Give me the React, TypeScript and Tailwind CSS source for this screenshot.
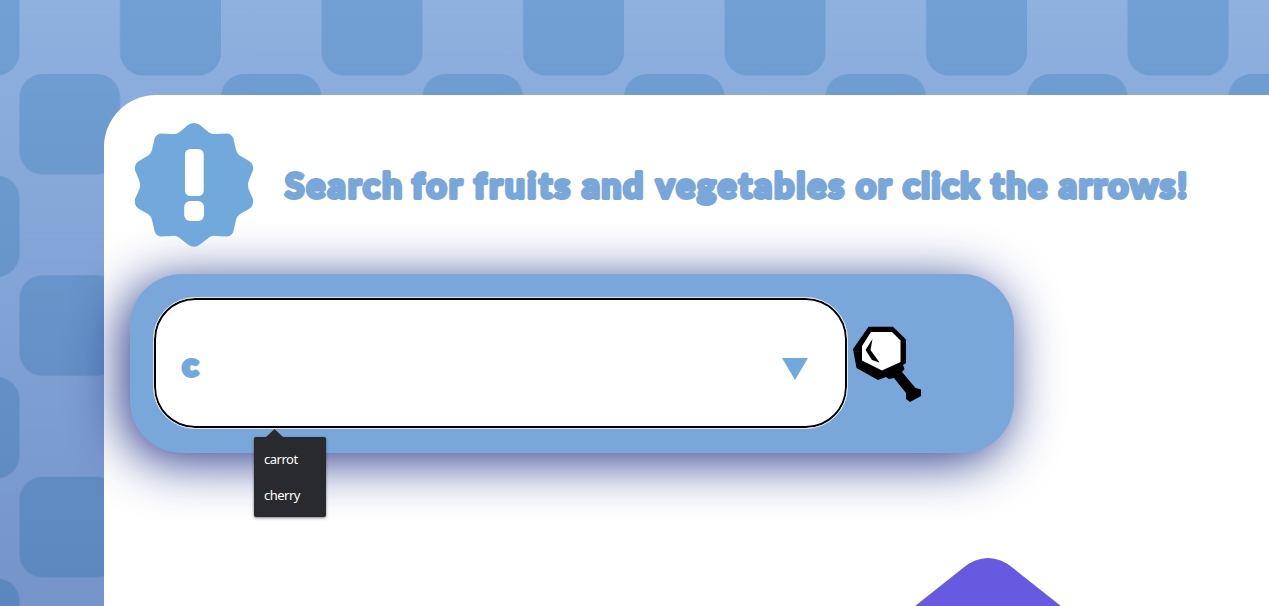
const headingWords = [
  { word: "Search", x: 3, width: 117 },
  { word: "for", x: 130, width: 50 },
  { word: "fruits", x: 192, width: 96 },
  { word: "and", x: 300, width: 61 },
  { word: "vegetables", x: 374, width: 188 },
  { word: "or", x: 574, width: 35 },
  { word: "click", x: 621, width: 76 },
  { word: "the", x: 709, width: 56 },
  { word: "arrows!", x: 777, width: 128 },
];

function Backdrop() {
  return (
    <svg className="absolute inset-0 h-full w-full" aria-hidden="true">
      <defs>
        <linearGradient id="sky" x1="0" y1="0" x2="0" y2="1">
          <stop offset="0" stopColor="#8eb1e0" />
          <stop offset="1" stopColor="#7494ca" />
        </linearGradient>
        <linearGradient id="tileShade" gradientUnits="userSpaceOnUse" x1="0" y1="0" x2="0" y2="606">
          <stop offset="0" stopColor="#72a0d4" />
          <stop offset="1" stopColor="#5b86be" />
        </linearGradient>
        <pattern id="tiles" width="201.5" height="201.4" x="19.5" y="74" patternUnits="userSpaceOnUse">
          <rect x="0" y="0" width="100.5" height="100.5" rx="23" fill="#fff" />
          <rect x="100.5" y="101.5" width="101" height="101.5" rx="23" fill="#fff" />
          <rect x="100.5" y="-99.9" width="101" height="101.5" rx="23" fill="#fff" />
        </pattern>
        <mask id="tileMask">
          <rect width="1269" height="606" fill="url(#tiles)" />
        </mask>
      </defs>
      <rect width="100%" height="100%" fill="url(#sky)" />
      <rect width="1269" height="606" fill="url(#tileShade)" mask="url(#tileMask)" />
    </svg>
  );
}

function Badge() {
  return (
    <svg className="h-[124px] w-[120px] shrink-0" viewBox="134 123 120 124" aria-hidden="true">
      <path
        fill="#72a9dd"
        d="M188 125 Q194 121 200 125 L209 132.500 Q212 134.500 216 134 L227 133.500 Q232 134 233.500 139 L236 150 Q237 153 239 155 L249 161 Q254 164 253 170 L249 180 Q247 185 249 190 L253 199 Q254 206 249 209 L240 214 Q237 216 236 220 L233.500 231 Q232 236 227 236.500 L216 236 Q212 235 209 237.500 L200 244.500 Q194 249 188 244.500 L179 237.500 Q176 235 172 236 L161 236.500 Q156 236 154.500 231 L152 220 Q151 216 148 214 L139 209 Q134 206 135 199 L139 190 Q141 185 139 180 L135 170 Q134 164 139 161 L149 155 Q151 153 152 150 L154.500 139 Q156 134 161 133.500 L172 134 Q176 134.500 179 132.500 Z"
      />
      <rect x="185" y="149" width="18.700" height="47" rx="5.500" fill="#fff" />
      <rect x="184.200" y="201" width="19.800" height="20" rx="6" fill="#fff" />
    </svg>
  );
}

function Magnifier() {
  return (
    <svg className="h-[95px] w-[95px] shrink-0" viewBox="0 0 95 95" aria-hidden="true">
      <path d="M28.500 11.700H53L66 24.500V48L63 50L64.500 54L62 57L75.500 73L81 74.500V81L70 87L66 84V78L54 63L49 64L46 62L38 65L16.500 53L13 34Z" />
      <path fill="#fff" d="M31 17H52L60.500 25.500V47L42 55.500L22 45.500V31Z" />
      <path d="M32.500 24L25.500 35L32 45L39.500 47.500L30.500 35Z" />
    </svg>
  );
}

function Suggestions() {
  return (
    <div className="absolute top-[139px] left-[100px] h-20 w-[72px] rounded-[2px] bg-[#292a2d] font-['Noto_Sans',sans-serif] text-[13px] leading-[36px] tracking-[-0.5px] text-white shadow-[0_1px_3px_rgba(0,0,0,0.5)]">
      <svg className="absolute -top-2 left-3 h-2 w-[17px]" viewBox="0 0 17 8" aria-hidden="true">
        <path d="M0 8L8.500 0L17 8Z" fill="#292a2d" />
      </svg>
      <ul className="px-2.5 pt-1">
        <li>carrot</li>
        <li>cherry</li>
      </ul>
    </div>
  );
}

export default function App() {
  return (
    <div className="relative h-[606px] w-[1269px] overflow-hidden bg-[#82a4d6] pt-[95px] pl-[104px]">
      <Backdrop />
      <main className="relative h-[700px] rounded-tl-[52px] bg-white pt-7 pl-[26px]">
        <header className="flex h-[124px] items-center gap-[29px] pl-1">
          <Badge />
          <svg
            className="-ml-px h-[60px] w-[920px]"
            viewBox="0 0 920 60"
            role="heading"
            aria-level={1}
            aria-label="Search for fruits and vegetables or click the arrows!"
          >
            <g
              className="fill-[#7aa7da] stroke-[#7aa7da] font-['Lato','Liberation_Sans',sans-serif] text-[35px] font-bold"
              strokeWidth="4"
              strokeLinejoin="round"
            >
              {headingWords.map(({ word, x, width }) => (
                <text key={word} x={x} y="43" textLength={width} lengthAdjust="spacing">
                  {word}
                </text>
              ))}
            </g>
          </svg>
        </header>
        <section className="mt-[27px] flex h-[179px] w-[884px] rounded-[52px] bg-[#7aa7da] pt-[23px] pl-[23px] shadow-[-7px_8px_52px_rgba(26,42,128,0.93)]">
          <div className="relative flex h-[132px] w-[695px] shrink-0 items-center justify-between rounded-[42px] border border-[#dde7f0] bg-white pr-[39px] pl-[22px] ring-2 ring-black ring-inset">
            <svg className="mt-2.5 h-14 w-10 overflow-visible" viewBox="0 0 40 56" aria-hidden="true">
              <text
                x="6.5"
                y="36"
                textLength="15.5"
                lengthAdjust="spacingAndGlyphs"
                className="fill-[#72a9dd] stroke-[#72a9dd] font-['Lato','Liberation_Sans',sans-serif] text-[31px] font-black"
                strokeWidth="4"
                strokeLinejoin="round"
              >
                c
              </text>
            </svg>
            <svg className="mt-3 h-[22px] w-[26px]" viewBox="0 0 26 22" aria-hidden="true">
              <path d="M0 0H26L13 22Z" fill="#72a9dd" />
            </svg>
            <Suggestions />
          </div>
          <div className="-ml-2 pt-[18px]">
            <Magnifier />
          </div>
        </section>
        <svg className="mt-[105px] ml-[780px] h-[70px] w-[160px] overflow-visible" viewBox="0 0 160 70" aria-hidden="true">
          <path d="M-10 60L53 10Q65 0 78 0Q91 0 103 10L166 60V70H-10Z" fill="#6759e0" />
        </svg>
      </main>
    </div>
  );
}
